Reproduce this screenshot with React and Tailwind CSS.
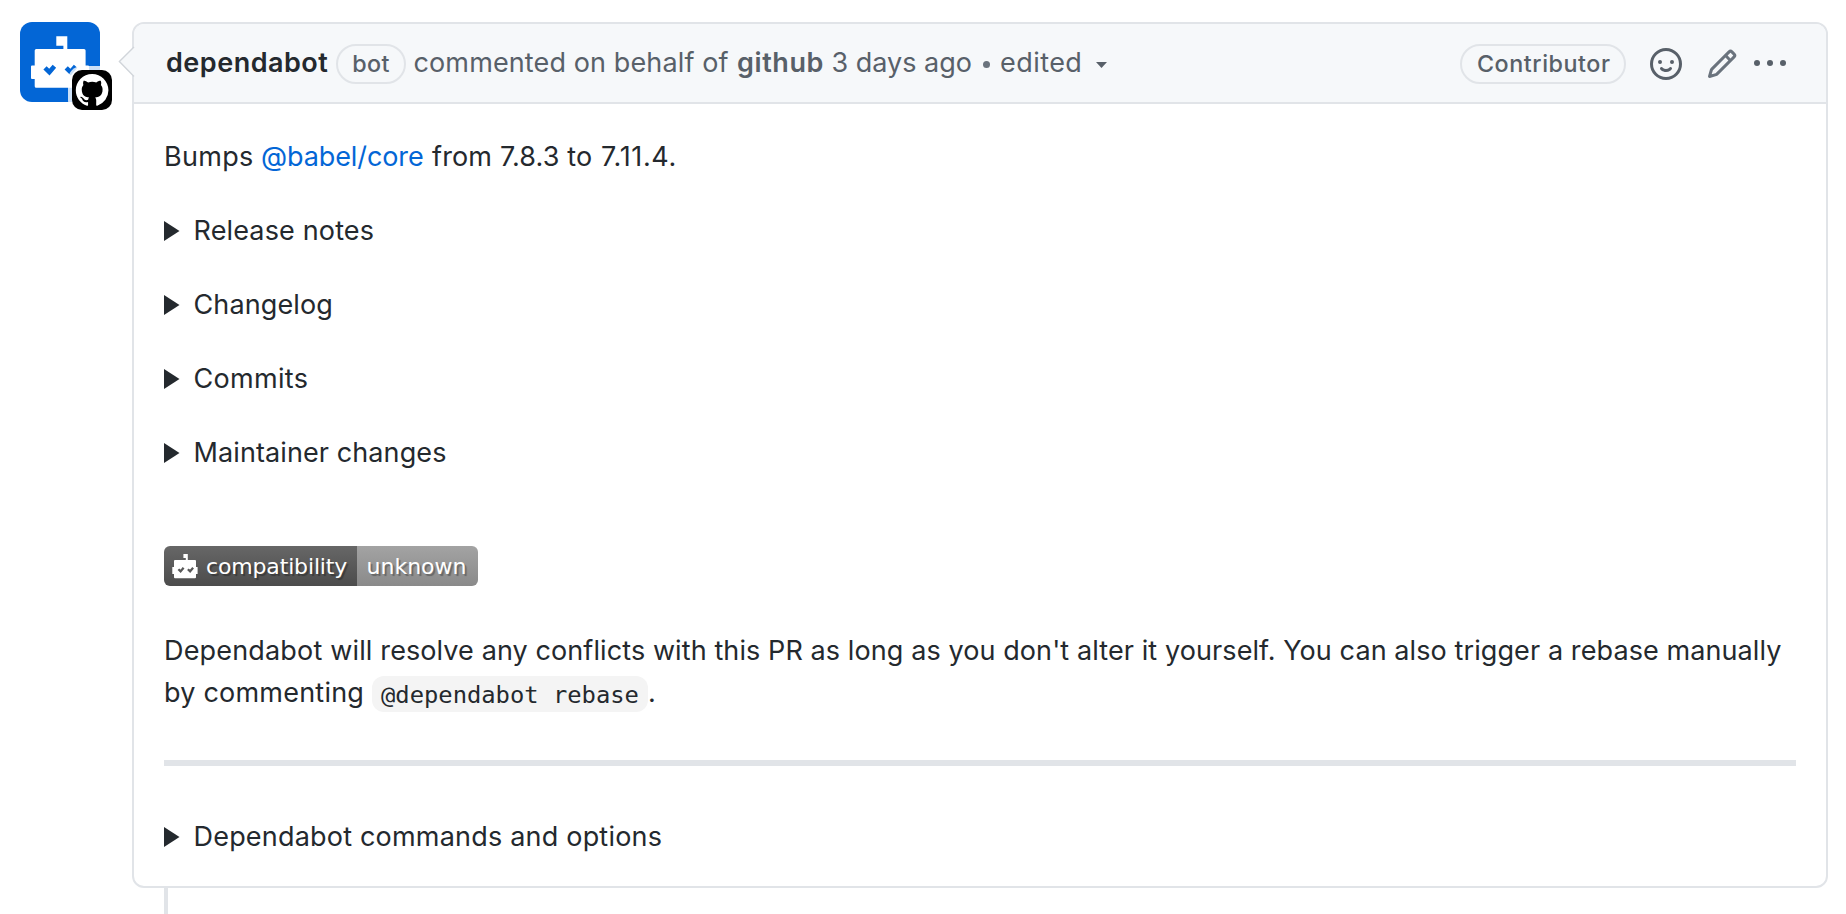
function RobotAvatar() {
  return (
    <svg className="block size-20" viewBox="0 0 80 80">
      <rect width="80" height="80" rx="12" fill="#0366d6" />
      <path
        d="M36.3 14.3h11V27H64a1.6 1.6 0 0 1 1.6 1.6V43.4H68a1 1 0 0 1 1 1V56a1 1 0 0 1-1 1h-2.4v7.2a1.6 1.6 0 0 1-1.6 1.6H16.3a1.6 1.6 0 0 1-1.6-1.6V57H12a1 1 0 0 1-1-1V44.4a1 1 0 0 1 1-1h2.7V28.6a1.6 1.6 0 0 1 1.6-1.6h27.1v-3.3h-7.1z"
        fill="#fff"
      />
      <path d="M25 45.8l4.4 4.3 5-5.8M46.2 45.8l4.4 4.3 5-5.8" fill="none" stroke="#0366d6" strokeWidth="4.6" />
    </svg>
  );
}

function GitHubBadge() {
  return (
    <span className="absolute top-12 left-[52px] block size-10 rounded-[10px] bg-black shadow-[0_0_0_4px_rgba(255,255,255,0.8)]">
      <svg className="block size-10" viewBox="0 0 40 40">
        <g transform="translate(3.8 4) scale(2.04)">
          <path
            fill="#fff"
            d="M8 0C3.58 0 0 3.58 0 8c0 3.54 2.29 6.53 5.47 7.59.4.07.55-.17.55-.38 0-.19-.01-.82-.01-1.49-2.01.37-2.53-.49-2.69-.94-.09-.23-.48-.94-.82-1.13-.28-.15-.68-.52-.01-.53.63-.01 1.08.58 1.23.82.72 1.21 1.87.87 2.33.66.07-.52.28-.87.51-1.07-1.78-.2-3.64-.89-3.64-3.95 0-.87.31-1.59.82-2.15-.08-.2-.36-1.02.08-2.12 0 0 .67-.21 2.2.82.64-.18 1.32-.27 2-.27s1.36.09 2 .27c1.53-1.04 2.2-.82 2.2-.82.44 1.1.16 1.92.08 2.12.51.56.82 1.27.82 2.15 0 3.07-1.87 3.75-3.65 3.95.29.25.54.73.54 1.48 0 1.07-.01 1.93-.01 2.2 0 .21.15.46.55.38A8.01 8.01 0 0 0 16 8c0-4.42-3.58-8-8-8z"
          />
        </g>
      </svg>
    </span>
  );
}

function SmileyIcon() {
  return (
    <svg className="block size-8" viewBox="0 0 16 16" fill="currentColor">
      <path
        fillRule="evenodd"
        d="M1.5 8a6.5 6.5 0 1 1 13 0 6.5 6.5 0 0 1-13 0zM8 0a8 8 0 1 0 0 16A8 8 0 0 0 8 0zM5 8a1 1 0 1 0 0-2 1 1 0 0 0 0 2zm7-1a1 1 0 1 1-2 0 1 1 0 0 1 2 0zM5.32 9.636a.75.75 0 0 1 1.038.175l.007.009c.103.118.22.222.35.31.264.178.683.37 1.285.37.602 0 1.02-.192 1.285-.371.13-.088.247-.192.35-.31l.007-.008a.75.75 0 0 1 1.222.87l-.614-.431c.614.43.614.431.613.431v.001l-.001.002-.002.003-.005.007-.014.019a1.984 1.984 0 0 1-.184.213c-.16.166-.338.316-.53.445-.63.418-1.37.638-2.127.629-.946 0-1.652-.308-2.126-.63a3.32 3.32 0 0 1-.715-.657l-.014-.02-.005-.006-.002-.003v-.002h-.001l.613-.432-.614.43a.75.75 0 0 1 .183-1.044h.001z"
      />
    </svg>
  );
}

function PencilIcon() {
  return (
    <svg className="block size-8" viewBox="0 0 16 16" fill="currentColor">
      <path
        fillRule="evenodd"
        d="M11.013 1.427a1.75 1.75 0 0 1 2.474 0l1.086 1.086a1.75 1.75 0 0 1 0 2.474l-8.61 8.61c-.21.21-.47.364-.756.445l-3.251.93a.75.75 0 0 1-.927-.928l.929-3.25a1.75 1.75 0 0 1 .445-.758l8.61-8.61zm1.414 1.06a.25.25 0 0 0-.354 0L10.811 3.75l1.439 1.44 1.263-1.263a.25.25 0 0 0 0-.354l-1.086-1.086zM11.189 6.25L9.75 4.81l-6.286 6.287a.25.25 0 0 0-.064.108l-.558 1.953 1.953-.558a.249.249 0 0 0 .108-.064l6.286-6.286z"
      />
    </svg>
  );
}

function KebabIcon() {
  return (
    <svg className="block h-[6px] w-[32px]" viewBox="0 0 32 6" fill="currentColor">
      <circle cx="3" cy="3" r="3" />
      <circle cx="16" cy="3" r="3" />
      <circle cx="29" cy="3" r="3" />
    </svg>
  );
}

function Disclosure({ children, className }) {
  return (
    <div className="flex h-[42px] items-center whitespace-nowrap">
      <svg className="block h-[20px] w-[16px] shrink-0" viewBox="0 0 16 20">
        <path d="M0 0L15.5 10L0 20z" fill="#24292e" />
      </svg>
      <span className={`ml-[13.5px] ${className}`}>{children}</span>
    </div>
  );
}

function CompatibilityBadge() {
  return (
    <div className="flex h-10 w-[314px] overflow-hidden rounded-[6px] font-['DejaVu_Sans',sans-serif] text-[22px] leading-[42px] text-white [text-shadow:2px_2px_1px_rgba(1,1,1,0.3)]">
      <div className="flex w-[193px] bg-linear-to-b from-[#676767] to-[#4c4c4c] pl-2">
        <svg className="mt-[8px] block h-[25px] w-[26px]" viewBox="0 0 26 25">
          <path
            d="M11.4 0h4.4v6H23a1 1 0 0 1 1 1v6h1.6v7H24v3.2a1 1 0 0 1-1 1H3a1 1 0 0 1-1-1V20H.3v-7H2V7a1 1 0 0 1 1-1h10.8V3.9h-2.4z"
            fill="#fff"
          />
          <path d="M6.4 15.2l2.2 2.2 3-3.6M15.9 15.2l2.2 2.2 3-3.6" fill="none" stroke="#595959" strokeWidth="2.3" />
        </svg>
        <span className="ml-[8px] tracking-[-0.15px]">compatibility</span>
      </div>
      <div className="w-[121px] bg-linear-to-b from-[#a3a3a3] to-[#8a8a8a] pl-[9.5px]">unknown</div>
    </div>
  );
}

export default function App() {
  return (
    <div className="flex h-[914px] w-[1846px] overflow-hidden bg-white pt-[22px] pl-5 font-[Inter,sans-serif] text-[27px] leading-[42px] text-[#24292e]">
      <div className="relative mr-8 size-20 shrink-0">
        <RobotAvatar />
        <GitHubBadge />
      </div>

      <div className="flex flex-col">
        <article className="relative h-[866px] w-[1696px] rounded-[12px] border-2 border-[#e1e4e8]">
          <header className="flex h-[80px] items-start rounded-t-[10px] border-b-2 border-[#e1e4e8] bg-[#f6f8fa] whitespace-nowrap text-[#586069]">
            <div className="flex pt-[18px] pl-[32px]">
              <span className="w-[170px] font-semibold tracking-[0.5px] text-[#24292e]">dependabot</span>
              <span className="mt-[2px] flex h-10 w-[70px] justify-center rounded-full border-2 border-[#e1e4e8] text-[23.3px] leading-[36px] font-medium tracking-[0.4px]">
                bot
              </span>
              <span className="ml-[7.5px] w-[323.5px] tracking-[0.12px]">commented on behalf of</span>
              <span className="w-[94.5px] font-semibold tracking-[0.6px]">github</span>
              <span className="w-[151.5px]">3 days ago</span>
              <span className="mt-[19px] size-[7px] rounded-full bg-[#6a737d]" />
              <span className="ml-[10px] w-[95.5px] tracking-[0.45px]">edited</span>
              <svg className="mt-[20px] block h-[6px] w-[11px]" viewBox="0 0 11 6">
                <path d="M0 0h11L5.5 6z" fill="#586069" />
              </svg>
            </div>
            <div className="flex grow items-start justify-end pt-[20px] pr-[40px]">
              <span className="flex h-10 w-[166px] justify-center rounded-full border-2 border-[#e1e4e8] pl-[1.5px] text-[23.3px] leading-[36px] font-medium tracking-[0.55px]">
                Contributor
              </span>
              <span className="mt-1 ml-6">
                <SmileyIcon />
              </span>
              <span className="mt-1 ml-6 text-[#6a737d]">
                <PencilIcon />
              </span>
              <span className="mt-4 ml-4">
                <KebabIcon />
              </span>
            </div>
          </header>

          <svg className="absolute top-[22px] -left-[16px] block h-[32px] w-[17px]" viewBox="0 0 17 32">
            <path d="M17 0L1 16l16 16z" fill="#f6f8fa" />
            <path d="M16 1L1.4 15.6L16 30.6" fill="none" stroke="#d1d5da" strokeWidth="1.4" />
          </svg>

          <div className="flex flex-col pt-[32px] pl-[30px]">
            <div className="flex flex-col gap-8">
              <p className="flex whitespace-pre">
                <span className="w-[97px] tracking-[0.3px]">Bumps</span>
                <a className="w-[171px] tracking-[-0.1px] text-[#0366d6]">@babel/core</a>
                <span className="w-[169px] tracking-[0.15px]">from 7.8.3 to </span>
                <span className="tracking-[0.65px]">7.11.4.</span>
              </p>
              <Disclosure className="tracking-[0.15px]">Release notes</Disclosure>
              <Disclosure className="tracking-[0.12px]">Changelog</Disclosure>
              <Disclosure className="tracking-[0.32px]">Commits</Disclosure>
              <Disclosure className="tracking-[0.1px]">Maintainer changes</Disclosure>
            </div>

            <div className="mt-[72px]">
              <CompatibilityBadge />
            </div>

            <p className="mt-[44px] whitespace-nowrap">
              <span className="block tracking-[0.094px]">
                <span className="tracking-[0.17px]">Dependabot will </span>
                resolve any conflicts with this PR as long as you don't alter it yourself. You can also trigger a rebase
                manually
              </span>
              <span className="flex">
                <span className="w-[208px] tracking-[0.22px]">by commenting</span>
                <code className="mt-[4px] h-9 w-[276px] rounded-[12px] bg-[#f4f4f4] pl-[9px] font-['DejaVu_Sans_Mono',monospace] text-[23.8px] leading-[38px]">
                  @dependabot rebase
                </code>
                <span>.</span>
              </span>
            </p>

            <hr className="mt-[46px] h-[6px] w-[1632px] border-0 bg-[#e1e4e8]" />

            <div className="mt-[50px]">
              <Disclosure className="tracking-[0.2px]">Dependabot commands and options</Disclosure>
            </div>
          </div>
        </article>
        <div className="ml-8 h-[26px] w-1 bg-[#e1e4e8]" />
      </div>
    </div>
  );
}
